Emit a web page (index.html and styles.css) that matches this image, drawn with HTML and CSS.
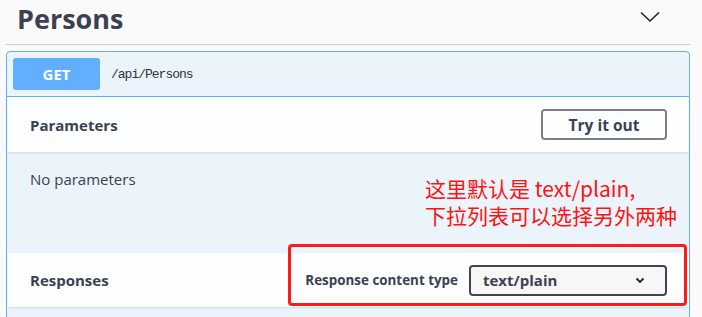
FILE: index.html
```html
<!DOCTYPE html>
<html lang="en">
<head>
    <meta charset="UTF-8">
    <meta name="viewport" content="width=device-width, initial-scale=1.0">
    <title>Persons</title>
    <link rel="stylesheet" href="styles.css">
</head>
<body>
    <div class="tag-section">
        <div class="tag-header">
            <h3 class="tag-title">Persons</h3>
            <svg class="tag-arrow" width="20" height="12" viewBox="0 0 20 12">
                <path d="M1 1.5 L10 10 L19 1.5" fill="none" stroke="#222" stroke-width="1.6"/>
            </svg>
        </div>

        <div class="opblock">
            <div class="opblock-summary">
                <span class="method">GET</span>
                <span class="path">/api/Persons</span>
            </div>

            <div class="section-header">
                <h4>Parameters</h4>
                <button type="button" class="try-btn">Try it out</button>
            </div>
            <div class="params-body">
                <p>No parameters</p>
            </div>

            <div class="section-header responses-header">
                <h4>Responses</h4>
                <div class="content-type">
                    <label for="contentType">Response content type</label>
                    <div class="select-box" id="contentType">
                        <span>text/plain</span>
                        <svg width="10" height="7" viewBox="0 0 10 7">
                            <path d="M1.5 1.5 L5 5 L8.5 1.5" fill="none" stroke="#222" stroke-width="1.8"/>
                        </svg>
                    </div>
                </div>
            </div>
            <div class="responses-body"></div>
        </div>
    </div>

    <!-- annotation drawn over the screenshot -->
    <div class="note">这里默认是 text/plain,<br>下拉列表可以选择另外两种</div>
    <div class="note-box"></div>
</body>
</html>
```

FILE: styles.css
```css
body {
    margin: 0;
    padding: 0;
    background-color: #fafafa;
    font-family: "Open Sans", "Noto Sans", sans-serif;
    color: #3b4151;
    position: relative;
    height: 317px;
    overflow: hidden;
}
.tag-section {
    margin: 0 12px 0 6px;
}
.tag-header {
    display: flex;
    align-items: center;
    justify-content: space-between;
    height: 44px;
    border-bottom: 1px solid #cfcfcf;
    padding: 0 30px 0 11px;
}
.tag-title {
    margin: 0;
    font-size: 27px;
    font-weight: 700;
    line-height: 36px;
    margin-top: -7px;
}
.tag-arrow {
    margin-top: -11px;
}
.opblock {
    margin-top: 6px;
    border: 1px solid #61affe;
    border-radius: 4px;
    background: #ebf3fb;
}
.opblock-summary {
    display: flex;
    align-items: center;
    padding: 6px;
    border-bottom: 1px solid #61affe;
}
.method {
    width: 87px;
    height: 32px;
    line-height: 32px;
    text-align: center;
    background: #61affe;
    color: white;
    border-radius: 3px;
    font-size: 15px;
    font-weight: 700;
}
.path {
    margin-left: 11px;
    font-family: "Liberation Mono", monospace;
    font-size: 13px;
    letter-spacing: -1px;
    color: #2f3444;
    margin-top: 1px;
}
.section-header {
    display: flex;
    align-items: center;
    justify-content: space-between;
    height: 55px;
    padding: 0 22px 0 23px;
    background: rgba(255, 255, 255, 0.85);
    box-shadow: 0 1px 2px rgba(0, 0, 0, 0.1);
}
.section-header h4 {
    margin: 0;
    font-size: 15px;
    font-weight: 700;
}
.try-btn {
    width: 126px;
    height: 31px;
    border: 2px solid #808080;
    border-radius: 4px;
    background: transparent;
    font-family: inherit;
    font-size: 15.5px;
    font-weight: 700;
    color: #3b4151;
    cursor: pointer;
}
.params-body {
    height: 101px;
    padding: 0 23px;
}
.params-body p {
    margin: 0;
    padding-top: 16px;
    font-size: 15px;
    line-height: 22px;
}
.responses-header {
    height: 54px;
}
.content-type {
    display: flex;
    align-items: center;
    gap: 11px;
}
.content-type label {
    font-size: 13.4px;
    font-weight: 700;
}
.select-box {
    display: flex;
    align-items: center;
    justify-content: space-between;
    box-sizing: border-box;
    width: 198px;
    height: 31px;
    padding: 0 20px 0 12px;
    border: 2px solid #41444e;
    border-radius: 4px;
    background: #f7f7f7;
    font-size: 15px;
    font-weight: 700;
}
.responses-body {
    height: 20px;
}
.note {
    position: absolute;
    left: 425px;
    top: 175px;
    font-family: "Noto Sans CJK SC", sans-serif;
    font-size: 21px;
    line-height: 27px;
    color: #ff1212;
}
.note-box {
    position: absolute;
    left: 288px;
    top: 244px;
    width: 393px;
    height: 56px;
    border: 3px solid #ff1a1a;
    border-radius: 4px;
}
```
